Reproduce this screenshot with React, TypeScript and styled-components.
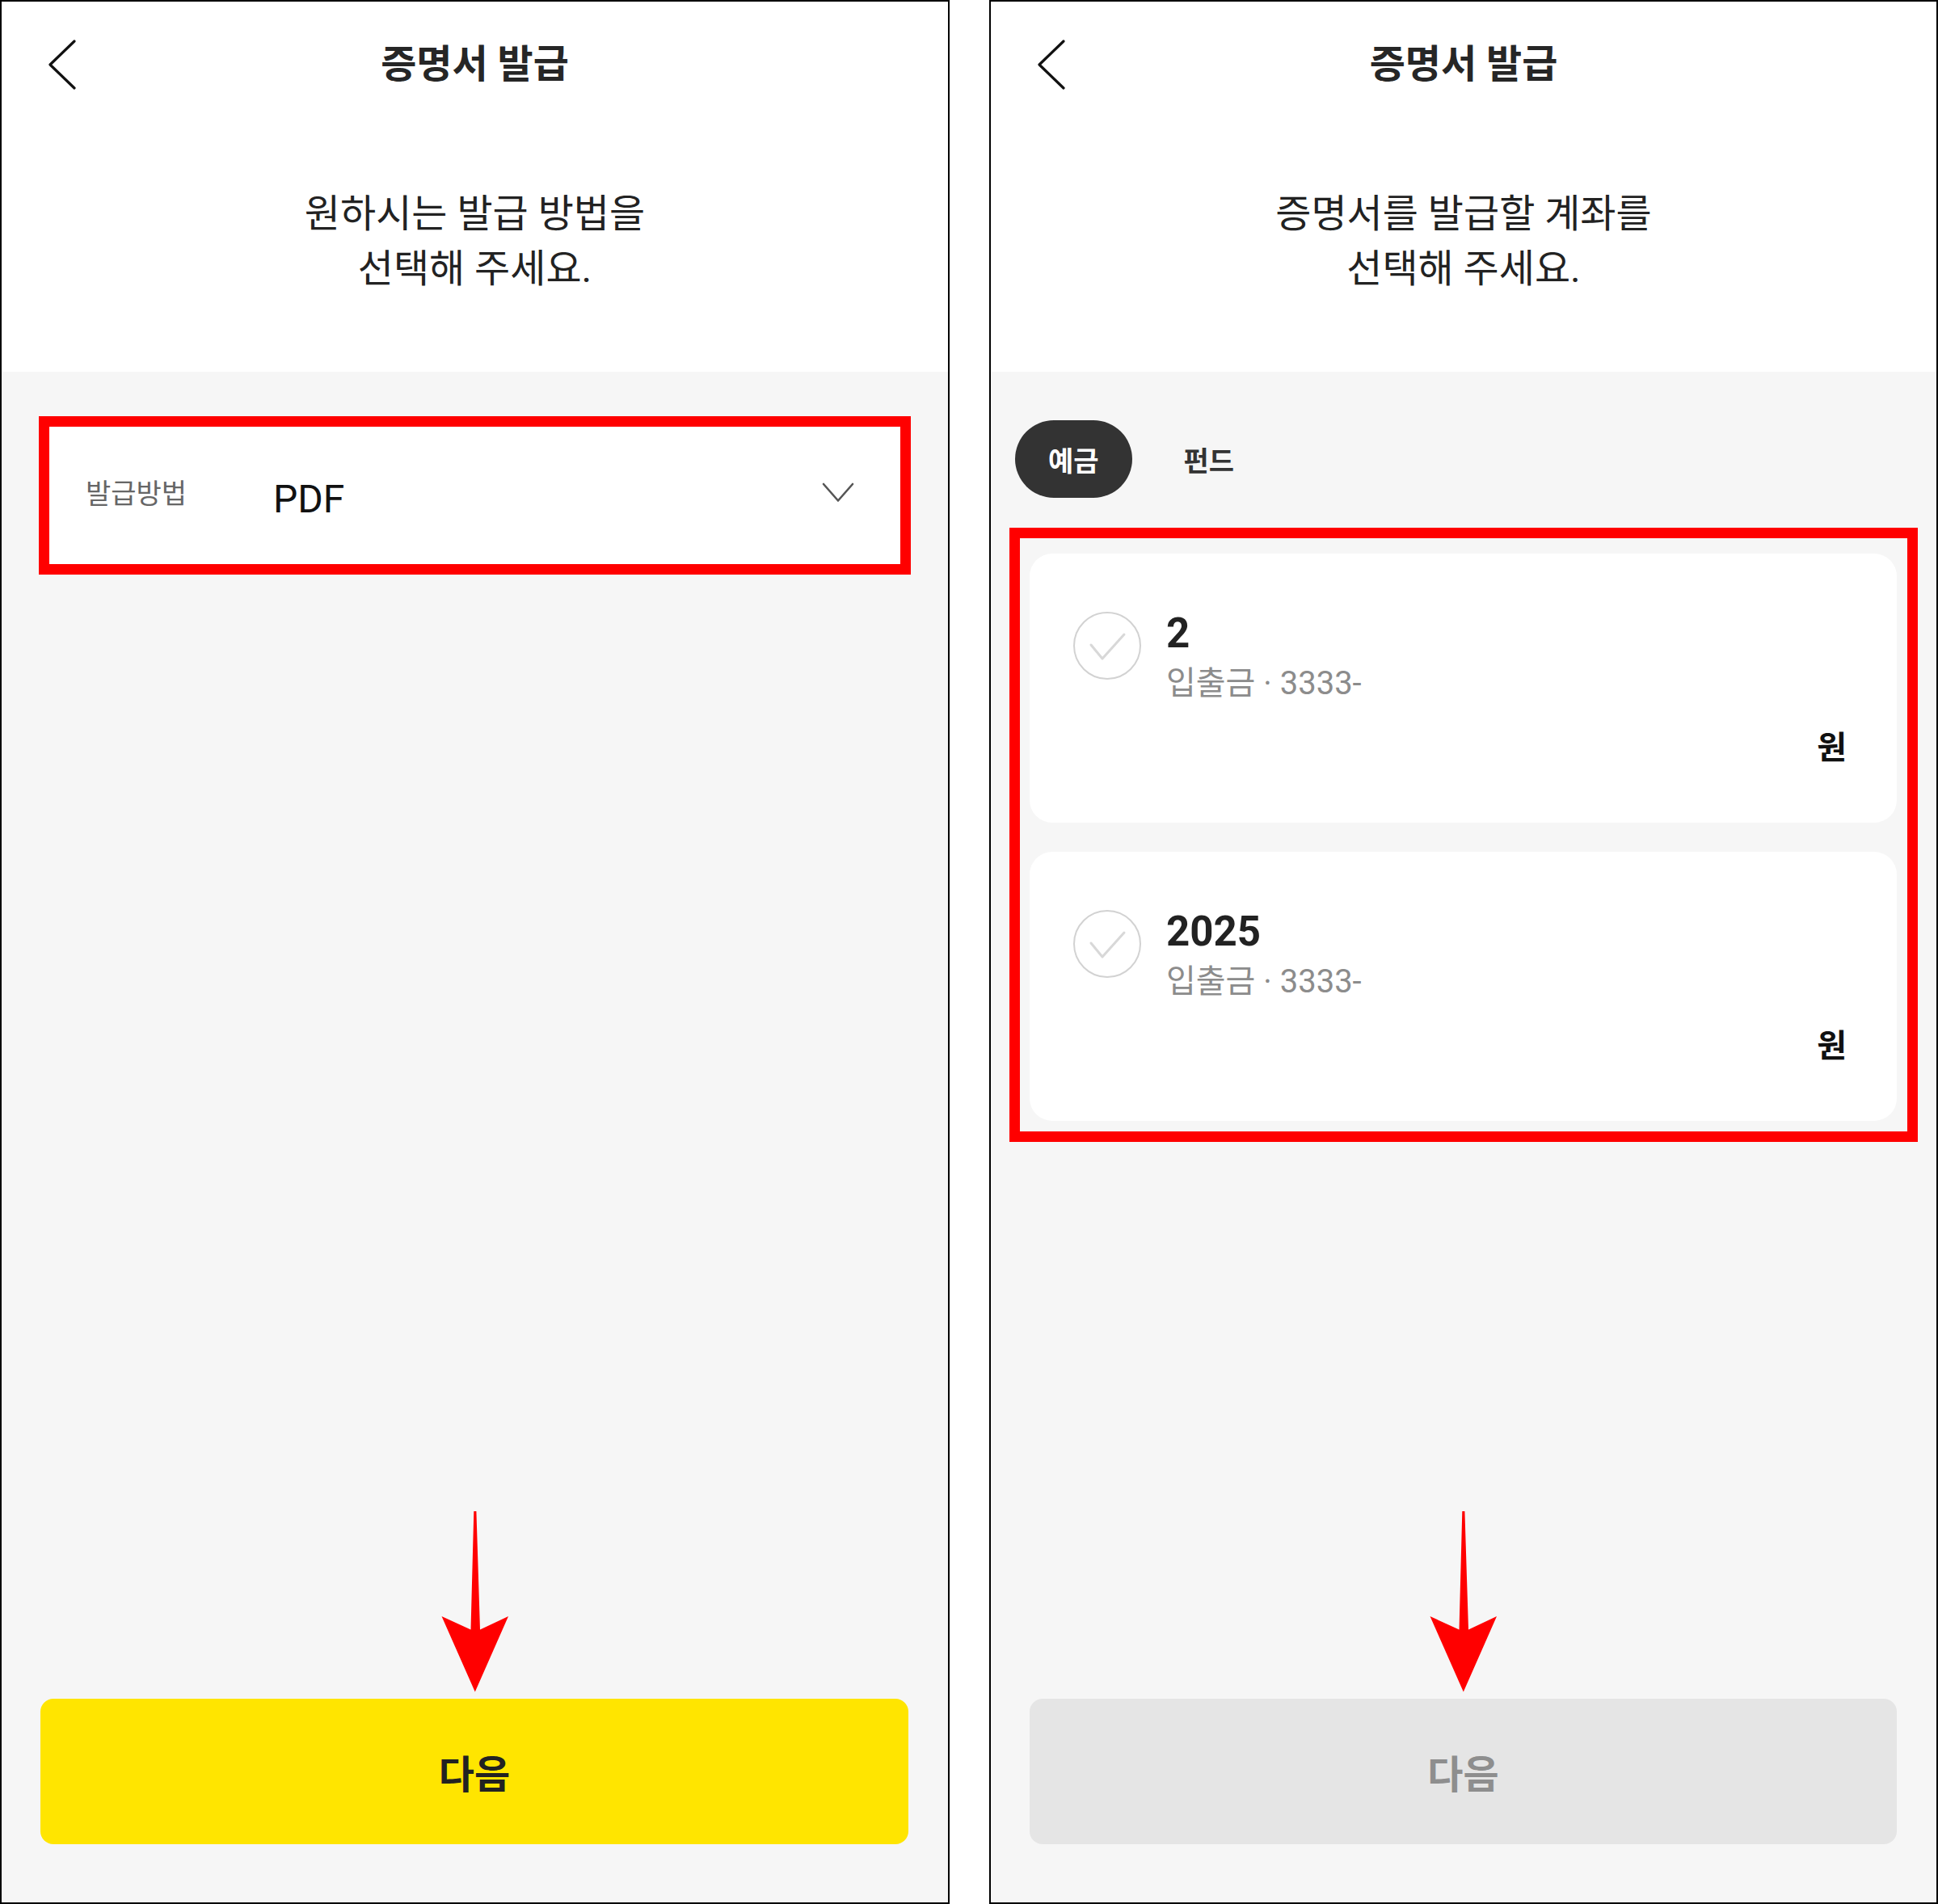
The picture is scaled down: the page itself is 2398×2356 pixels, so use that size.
import React from "react"
import styled, { createGlobalStyle } from "styled-components"

const GlobalStyle = createGlobalStyle`
  html, body {
    margin: 0;
    padding: 0;
    background: #ffffff;
  }
  body {
    font-family: Roboto, "Noto Sans CJK KR", sans-serif;
    color: #222222;
  }
  * {
    box-sizing: border-box;
  }
`

type Account = {
  name: string
  meta: string
}

const accounts: Account[] = [
  { name: "2", meta: "입출금 · 3333-" },
  { name: "2025", meta: "입출금 · 3333-" },
]

export default function App() {
  return (
    <>
      <GlobalStyle />
      <Screens>
        {/* step 1: choose how to issue */}
        <Phone>
          <TopBar>
            <BackButton aria-label="뒤로">
              <BackIcon />
            </BackButton>
            <Title>증명서 발급</Title>
          </TopBar>
          <Prompt>
            원하시는 발급 방법을
            <br />
            선택해 주세요.
          </Prompt>
          <Body $top={55}>
            <Highlight $margin="0 46px" $padding="0">
              <Field>
                <FieldLabel>발급방법</FieldLabel>
                <FieldValue>PDF</FieldValue>
                <Caret>
                  <ChevronDown />
                </Caret>
              </Field>
            </Highlight>
            <Footer>
              <PointerArrow />
              <NextButton $enabled>다음</NextButton>
            </Footer>
          </Body>
        </Phone>

        {/* step 2: choose the account */}
        <Phone>
          <TopBar>
            <BackButton aria-label="뒤로">
              <BackIcon />
            </BackButton>
            <Title>증명서 발급</Title>
          </TopBar>
          <Prompt>
            증명서를 발급할 계좌를
            <br />
            선택해 주세요.
          </Prompt>
          <Body $top={60}>
            <TabBar>
              <Tab $active>예금</Tab>
              <Tab>펀드</Tab>
            </TabBar>
            <Highlight $margin="37px 23px 0" $padding="19px 13px 13px 12px">
              <CardList>
                {accounts.map((account) => (
                  <AccountCard key={account.name}>
                    <AccountRow>
                      <CheckCircle>
                        <CheckIcon />
                      </CheckCircle>
                      <div>
                        <AccountName>{account.name}</AccountName>
                        <AccountMeta>{account.meta}</AccountMeta>
                      </div>
                    </AccountRow>
                    <Amount>원</Amount>
                  </AccountCard>
                ))}
              </CardList>
            </Highlight>
            <Footer>
              <PointerArrow />
              <NextButton>다음</NextButton>
            </Footer>
          </Body>
        </Phone>
      </Screens>
    </>
  )
}

const BackIcon = () => (
  <svg width="36" height="64" viewBox="0 0 36 64" fill="none">
    <path
      d="M32 3 L2 32 L32 61"
      stroke="#111"
      strokeWidth="3.2"
      strokeLinecap="round"
      strokeLinejoin="round"
    />
  </svg>
)

const ChevronDown = () => (
  <svg width="40" height="26" viewBox="0 0 40 26" fill="none">
    <path
      d="M2 2 L20 22.5 L38 2"
      stroke="#555"
      strokeWidth="2.6"
      strokeLinecap="round"
      strokeLinejoin="round"
    />
  </svg>
)

const CheckIcon = () => (
  <svg width="80" height="80" viewBox="0 0 80 80" fill="none">
    <path
      d="M20 39 L34 56 L61 26"
      stroke="#d8d8d8"
      strokeWidth="3"
      strokeLinecap="round"
      strokeLinejoin="round"
    />
  </svg>
)

const PointerArrow = () => (
  <ArrowSvg width="84" height="224" viewBox="0 0 84 224">
    <polygon
      points="40.3,0 43.4,0 48,146.6 83,130 41.8,223.5 0.5,130 36.5,146.6"
      fill="#ff0000"
    />
  </ArrowSvg>
)

const Screens = styled.main`
  display: grid;
  grid-template-columns: 1175px 1174px;
  column-gap: 49px;
  width: 2398px;
  height: 2356px;
`

const Phone = styled.section`
  display: flex;
  flex-direction: column;
  height: 2356px;
  border: 2px solid #000;
  background: #ffffff;
`

const TopBar = styled.header`
  display: grid;
  grid-template-columns: 1fr auto 1fr;
  align-items: center;
  height: 156px;
`

const BackButton = styled.div`
  display: flex;
  align-items: center;
  margin-left: 58px;
`

const Title = styled.h1`
  margin: 0;
  font-size: 48px;
  line-height: 56px;
  font-weight: 700;
  color: #262626;
  white-space: nowrap;
`

const Prompt = styled.p`
  margin: 0;
  padding: 73px 0 93px;
  text-align: center;
  font-size: 48px;
  line-height: 68px;
  font-weight: 400;
  color: #222222;
`

const Body = styled.div<{ $top: number }>`
  flex: 1;
  display: flex;
  flex-direction: column;
  padding-top: ${({ $top }) => $top}px;
  padding-bottom: 72px;
  background: #f6f6f6;
`

const Highlight = styled.div<{ $margin: string; $padding: string }>`
  margin: ${({ $margin }) => $margin};
  padding: ${({ $padding }) => $padding};
  border: 13px solid #ff0000;
`

const Field = styled.div`
  display: flex;
  align-items: center;
  height: 170px;
  padding: 0 57px 0 45px;
  background: #ffffff;
`

const FieldLabel = styled.span`
  width: 232px;
  padding-bottom: 5px;
  font-size: 34px;
  line-height: 40px;
  color: #666666;
`

const FieldValue = styled.span`
  padding-top: 9px;
  font-size: 48px;
  line-height: 56px;
  color: #111111;
`

const Caret = styled.span`
  display: flex;
  margin-left: auto;
  margin-bottom: 7px;
`

const TabBar = styled.nav`
  display: flex;
  gap: 23px;
  padding-left: 30px;
`

const Tab = styled.div<{ $active?: boolean }>`
  display: flex;
  align-items: center;
  height: 96px;
  padding: 0 41px;
  border-radius: 48px;
  font-size: 34px;
  font-weight: 700;
  background: ${({ $active }) => ($active ? "#333333" : "transparent")};
  color: ${({ $active }) => ($active ? "#ffffff" : "#333333")};
`

const CardList = styled.div`
  display: flex;
  flex-direction: column;
  gap: 36px;
`

const AccountCard = styled.div`
  display: flex;
  flex-direction: column;
  height: 333px;
  padding: 71px 62px 0 54px;
  border-radius: 28px;
  background: #ffffff;
`

const AccountRow = styled.div`
  display: flex;
  align-items: flex-start;
  gap: 31px;
`

const CheckCircle = styled.div`
  display: flex;
  align-items: center;
  justify-content: center;
  flex: none;
  width: 84px;
  height: 84px;
  margin-top: 1px;
  border: 2px solid #d2d2d2;
  border-radius: 50%;
`

const AccountName = styled.div`
  font-size: 51px;
  line-height: 56px;
  font-weight: 700;
  color: #222222;
`

const AccountMeta = styled.div`
  margin-top: 12px;
  font-size: 40px;
  line-height: 44px;
  color: #8c8c8c;
`

const Amount = styled.div`
  margin-top: 35px;
  text-align: right;
  font-size: 40px;
  line-height: 46px;
  font-weight: 700;
  color: #111111;
`

const Footer = styled.div`
  display: flex;
  flex-direction: column;
  align-items: center;
  margin-top: auto;
`

const ArrowSvg = styled.svg`
  display: block;
`

const NextButton = styled.div<{ $enabled?: boolean }>`
  display: flex;
  align-items: center;
  justify-content: center;
  align-self: stretch;
  height: 180px;
  margin: 8px 49px 0 48px;
  border-radius: 16px;
  font-size: 48px;
  font-weight: 700;
  background: ${({ $enabled }) => ($enabled ? "#ffe500" : "#e5e5e5")};
  color: ${({ $enabled }) => ($enabled ? "#222222" : "#8e8e8e")};
`
